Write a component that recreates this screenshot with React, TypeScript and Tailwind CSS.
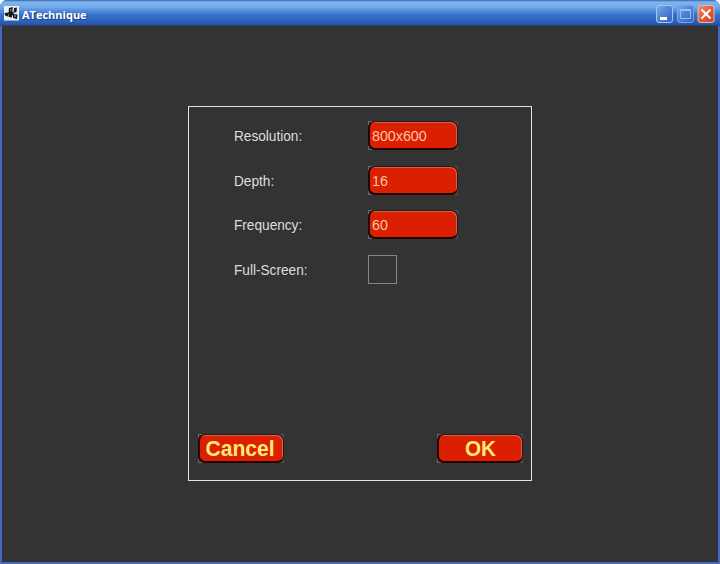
import React from "react";

function Plate({ className, children }: { className: string; children: React.ReactNode }) {
  return (
    <div className={`relative h-[29px] ${className}`}>
      <svg className="absolute inset-0 h-full w-full" shapeRendering="crispEdges">
        <path d="M0.5 4V0.5H4M0.5 25V28.5H4" fill="none" stroke="#68686a" />
        <svg x="100%" width="1" height="29" overflow="visible">
          <path d="M-4 0.5H-0.5V4M-0.5 25V28.5H-3" fill="none" stroke="#505052" />
        </svg>
      </svg>
      <div className="relative h-full w-full rounded-[7px] border-2 border-r border-t border-[#240604] border-r-[#301512] border-t-[#301512] bg-[#da2000] shadow-[inset_-1px_1px_0_#d36050]">
        {children}
      </div>
    </div>
  );
}

function Label({ children }: { children: React.ReactNode }) {
  return (
    <div className="w-[134px] pt-px text-[15.5px] leading-[18px] text-[#dedede]">
      <span className="inline-block origin-left scale-x-[0.88]">{children}</span>
    </div>
  );
}

function Field({ label, value }: { label: string; value: string }) {
  return (
    <div className="flex h-[29px] items-center">
      <Label>{label}</Label>
      <Plate className="w-[90px]">
        <div className="pl-[2px] pt-px text-[15.5px] leading-[26px] text-[#ffc4a8]">
          <span className="inline-block origin-left scale-x-[0.92]">{value}</span>
        </div>
      </Plate>
    </div>
  );
}

function AppIcon() {
  return (
    <svg width="15" height="15" viewBox="0 0 15 15">
      <path fill="#e8f1f4" d="M0 0h15v14.5H0z" />
      <path fill="#10191b" d="M5 2L9 1l-1 5-3.500 1.500zM10 2l3-.5L12.500 6 9.500 7zM.5 7l4-.5-.5 4-3-1zM5 8l3.500-.5-.5 4L4.500 11zM9 8l4.500.5-.5 4.500-4-1z" />
      <path fill="#10191b" d="M4 7l5-1.500L10 9l-5 1z" />
      <path fill="#657d78" d="M6 3l1.500-.5L7 5 6 5.500zM10 9l2 .3-.3 2L10 11z" />
    </svg>
  );
}

function WindowButtons() {
  return (
    <svg width="61" height="20" viewBox="0 0 61 20">
      <defs>
        <linearGradient id="blue" x1="0" y1="0" x2="1" y2="1">
          <stop stopColor="#81ace8" />
          <stop offset=".5" stopColor="#4c82d5" />
          <stop offset="1" stopColor="#2f62bb" />
        </linearGradient>
        <linearGradient id="red" x1="0" y1="0" x2="1" y2="1">
          <stop stopColor="#ed9274" />
          <stop offset=".5" stopColor="#e45c38" />
          <stop offset="1" stopColor="#c74222" />
        </linearGradient>
      </defs>
      <rect x="0.5" y="1.5" width="16" height="17" rx="2.5" fill="url(#blue)" stroke="#a6c9f2" />
      <path fill="#fff" d="M4 13h7v3H4z" />
      <rect x="21.5" y="1.5" width="16" height="17" rx="2.5" fill="url(#blue)" stroke="#78a5e2" />
      <path d="M24.5 5.5h10v9h-10z" fill="none" stroke="#96c0f3" />
      <path d="M24 6h11" stroke="#96c0f3" strokeWidth="2" />
      <rect x="42" y="1.5" width="16" height="17" rx="2.5" fill="url(#red)" stroke="#eeb9ae" />
      <path d="M45.5 5.5l9 9m0-9l-9 9" stroke="#fff" strokeWidth="2" />
    </svg>
  );
}

export default function App() {
  return (
    <div className="h-[564px] w-[720px] overflow-hidden bg-white font-['Liberation_Sans',sans-serif]">
      <div className="flex h-full w-full flex-col overflow-hidden rounded-t-[7px] bg-[#4668bf]">
        <header className="flex h-[26px] shrink-0 items-center bg-[linear-gradient(180deg,#3563ad_0px,#80b5ed_2px,#73aae9_7px,#518bd9_11px,#3470cb_15px,#2e66c2_20px,#2b56a5_24px,#243f7c_26px)] pl-1 pt-px">
          <AppIcon />
          <div className="ml-[3px] mt-px text-[11px] font-bold leading-[15px] text-white [font-family:'Open_Sans',sans-serif] [text-shadow:1px_1px_1px_#173f83]">
            ATechnique
          </div>
          <div className="ml-auto pr-[3px] pt-px">
            <WindowButtons />
          </div>
        </header>
        <main className="mx-0.5 mb-0.5 flex min-h-0 flex-1 justify-center bg-[#333333] pt-20">
          <section className="flex h-[375px] w-[344px] flex-col justify-between border border-[#e2e2e2] px-[9px] pb-[17px] pt-[14px]">
            <div className="flex flex-col gap-[15.7px] pl-9">
              <Field label="Resolution:" value="800x600" />
              <Field label="Depth:" value="16" />
              <Field label="Frequency:" value="60" />
              <div className="flex h-[29px] items-center">
                <Label>Full-Screen:</Label>
                <div className="size-[29px] border border-[#858585]" />
              </div>
            </div>
            <div className="-mr-px flex justify-between">
              <Plate className="w-[86px]">
                <div className="-ml-[2px] text-center text-[22px] font-bold leading-[27px] text-[#ffe878]">
                  <span className="inline-block scale-x-[0.96]">Cancel</span>
                </div>
              </Plate>
              <Plate className="w-[86px]">
                <div className="text-center text-[22px] font-bold leading-[27px] text-[#ffe878]">
                  <span className="inline-block scale-x-[0.94]">OK</span>
                </div>
              </Plate>
            </div>
          </section>
        </main>
      </div>
    </div>
  );
}
